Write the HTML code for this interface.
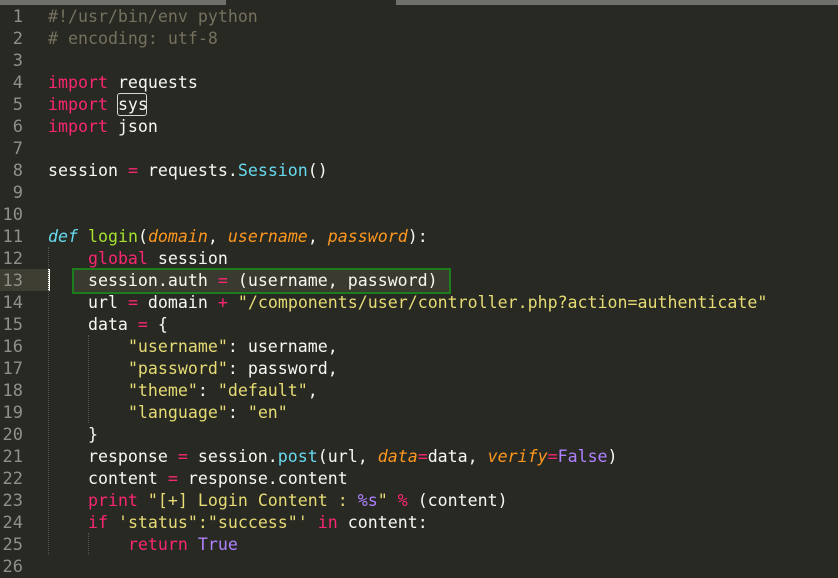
<!DOCTYPE html><html><head><style>
body{margin:0;width:838px;height:573px;background:#282923;overflow:hidden;position:relative;font-family:"DejaVu Sans Mono","Liberation Mono",monospace;font-size:16.6px}
.bar{position:absolute;top:0;height:5px;background:#6f706b}
.ln{position:absolute;left:0;width:23px;text-align:right;color:#8f908a;height:22px;line-height:22px;font-size:17px}
.l{position:absolute;left:48px;height:22px;line-height:22px;color:#f8f8f2;white-space:pre}
.c{color:#75715e}.k{color:#f92672}.f{color:#a6e22e}.s{color:#e6db74}.p{color:#fd971f;font-style:italic}.d{color:#66d9ef;font-style:italic}.b{color:#66d9ef}.n{color:#ae81ff}
.g{position:absolute;width:0;border-left:1px dotted #55564f}
</style></head><body>
<div class="bar" style="left:0;width:226px"></div><div class="bar" style="left:396px;width:442px"></div>
<div style="position:absolute;left:0;top:269px;width:49px;height:22px;background:#3e3d32"></div>
<div style="position:absolute;left:48px;top:269px;width:2px;height:22px;background:#f8f8f0"></div>
<div style="position:absolute;left:72px;top:268px;width:375px;height:22px;border:2px solid #1b7d1b;background:#3a3a31"></div>
<div class="g" style="left:48px;top:247px;height:308px"></div>
<div class="g" style="left:88px;top:335px;height:88px"></div>
<div class="g" style="left:88px;top:533px;height:22px"></div>
<div style="position:absolute;left:117px;top:93px;width:30px;height:23px;border:1px solid #d8d8d2;border-radius:3px;box-sizing:border-box"></div>
<div id="c"></div>
<script>
var L=[
'<span class="c">#!/usr/bin/env python</span>',
'<span class="c"># encoding: utf-8</span>',
'',
'<span class="k">import</span> requests',
'<span class="k">import</span> sys',
'<span class="k">import</span> json',
'',
'session <span class="k">=</span> requests.<span class="b">Session</span>()',
'','',
'<span class="d">def</span> <span class="f">login</span>(<span class="p">domain</span>, <span class="p">username</span>, <span class="p">password</span>):',
'    <span class="k">global</span> session',
'    session.auth <span class="k">=</span> (username, password)',
'    url <span class="k">=</span> domain <span class="k">+</span> <span class="s">"/components/user/controller.php?action=authenticate"</span>',
'    data <span class="k">=</span> {',
'        <span class="s">"username"</span>: username,',
'        <span class="s">"password"</span>: password,',
'        <span class="s">"theme"</span>: <span class="s">"default"</span>,',
'        <span class="s">"language"</span>: <span class="s">"en"</span>',
'    }',
'    response <span class="k">=</span> session.<span class="b">post</span>(url, <span class="p">data</span><span class="k">=</span>data, <span class="p">verify</span><span class="k">=</span><span class="n">False</span>)',
'    content <span class="k">=</span> response.content',
'    <span class="k">print</span> <span class="s">"[+] Login Content : </span><span class="n">%s</span><span class="s">"</span> <span class="k">%</span> (content)',
'    <span class="k">if</span> <span class="s">\'status":"success"\'</span> <span class="k">in</span> content:',
'        <span class="k">return</span> <span class="n">True</span>',
''];
var h='';for(var i=0;i<L.length;i++){var t=6+i*22;h+='<div class="ln" style="top:'+t+'px">'+(i+1)+'</div><div class="l" style="top:'+t+'px">'+L[i]+'</div>';}
document.getElementById('c').innerHTML=h;
</script>
</body></html>
